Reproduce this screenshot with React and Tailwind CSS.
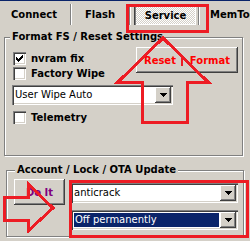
import React from 'react';

const RED = '#ed1c24';

function CheckBox({ checked }) {
  return (
    <span className="flex h-[13px] w-[13px] shrink-0 items-center justify-center bg-white shadow-[inset_1px_1px_#808080,inset_2px_2px_#404040,inset_-1px_-1px_#fff,inset_-2px_-2px_#d4d0c8]">
      {checked && (
        <svg width="7" height="7" viewBox="0 0 7 7" shapeRendering="crispEdges">
          <path d="M6 0h1v1H6zM5 1h2v1H5zM0 2h1v1H0zM4 2h3v1H4zM0 3h2v1H0zM3 3h3v1H3zM0 4h5v1H0zM1 5h3v1H1zM2 6h1v1H2z" fill="#000" />
        </svg>
      )}
    </span>
  );
}

function CheckRow({ label, checked }) {
  return (
    <div className="flex h-[13px] items-center gap-[5px]">
      <CheckBox checked={checked} />
      <span className="font-bold leading-[13px]">{label}</span>
    </div>
  );
}

const raised =
  'bg-[#d4d0c8] shadow-[inset_-1px_-1px_#404040,inset_1px_1px_#fff,inset_-2px_-2px_#808080]';

function ArrowBtn() {
  return (
    <div className={`flex h-[16px] w-[16px] shrink-0 items-center justify-center ${raised}`}>
      <svg width="7" height="4" viewBox="0 0 7 4" shapeRendering="crispEdges">
        <path d="M0 0h7v1H0zM1 1h5v1H1zM2 2h3v1H2zM3 3h1v1H3z" fill="#000" />
      </svg>
    </div>
  );
}

function Combo({ text, selected, className = '' }) {
  return (
    <div
      className={`flex h-[20px] items-center bg-white p-[2px] shadow-[inset_1px_1px_#808080,inset_2px_2px_#404040,inset_-1px_-1px_#fff,inset_-2px_-2px_#d4d0c8] ${className}`}
    >
      <div className="flex h-full flex-1 items-center">
        {selected ? (
          <span className="m-[1px] flex h-[14px] flex-1 items-center bg-[#0a246a] pl-[1px] leading-[14px] text-white">
            {text}
          </span>
        ) : (
          <span className="pl-[1px] leading-[14px]">{text}</span>
        )}
      </div>
      <ArrowBtn />
    </div>
  );
}

function Sep() {
  return <div className="h-[21px] w-[2px] shrink-0 border-l border-r border-l-[#808080] border-r-white" />;
}

export default function App() {
  return (
    <div className="relative h-[241px] w-[250px] overflow-hidden bg-[#d4d0c8] font-['DejaVu_Sans',Tahoma,sans-serif] text-[10px] text-black">
      {/* tabs */}
      <div className="flex h-[28px] items-center border-t border-[#0a246a] font-bold whitespace-nowrap">
        <span className="w-[70px] shrink-0 pl-[11px]">Connect</span>
        <Sep />
        <span className="w-[57px] shrink-0 pl-[13px]">Flash</span>
        <Sep />
        <div className="ml-[3px] flex h-[20px] w-[62px] shrink-0 items-center justify-center bg-[repeating-conic-gradient(#fff_0_25%,#d4d0c8_0_50%)] bg-[length:2px_2px] pt-[2px] pl-[1px] shadow-[inset_1px_1px_#404040,inset_2px_2px_#808080,inset_-1px_-1px_#fff]">
          Service
        </div>
        <div className="ml-[2px]">
          <Sep />
        </div>
        <span className="pl-[10px]">MemTools</span>
      </div>

      {/* Format FS / Reset Settings */}
      <div className="relative mt-[9px] ml-[4px] h-[119px] w-[239px] border border-[#808080] pt-[9px] pr-[4px] pl-[7px] shadow-[inset_1px_1px_#fff,1px_1px_#fff]">
        <span className="absolute -top-[7px] left-[5px] bg-[#d4d0c8] px-[2px] font-bold leading-[12px]">
          Format FS / Reset Settings
        </span>
        <div className="flex items-start">
          <div className="mt-[5px] ml-[1px] flex flex-col gap-[2px]">
            <CheckRow label="nvram fix" checked />
            <CheckRow label="Factory Wipe" />
          </div>
          <button className={`ml-auto flex h-[26px] w-[102px] items-center justify-center font-bold text-[#ff0000] ${raised}`}>
            Reset&nbsp;&nbsp;&nbsp;&nbsp;Format
          </button>
        </div>
        <Combo text="User Wipe Auto" className="mt-[5px] w-[161px]" />
        <div className="mt-[6px] ml-[1px]">
          <CheckRow label="Telemetry" />
        </div>
      </div>

      {/* Account / Lock / OTA Update */}
      <div className="relative mt-[14px] ml-[6px] h-[67px] w-[238px] border border-[#808080] pt-[8px] pl-[7px] shadow-[inset_1px_1px_#fff,1px_1px_#fff]">
        <span className="absolute -top-[7px] left-[8px] bg-[#d4d0c8] px-[2px] font-bold leading-[12px]">
          Account / Lock / OTA Update
        </span>
        <div className="flex items-start gap-[6px]">
          <button className={`flex h-[26px] w-[51px] shrink-0 items-center justify-center font-bold text-[#800080] ${raised}`}>
            Do It
          </button>
          <div className="mt-[4px] flex w-[167px] flex-col gap-[7px]">
            <Combo text="anticrack" />
            <Combo text="Off permanently" selected />
          </div>
        </div>
      </div>

      {/* red annotations */}
      <svg
        className="pointer-events-none absolute top-0 left-0"
        width="250"
        height="241"
        viewBox="0 0 250 241"
        shapeRendering="crispEdges"
      >
        <g fill="none" stroke={RED} strokeWidth="3" strokeLinejoin="miter">
          <rect x="127.5" y="5.5" width="80" height="26" />
          <rect x="70.5" y="181.5" width="177" height="55" />
          <polygon points="163,38 208,82 187,82 187,122 142,122 142,82 118,82" />
          <polygon points="53,208 28,231 28,220 4,220 4,197 28,197 28,184" />
        </g>
        <line x1="182" y1="58" x2="182" y2="66" stroke={RED} strokeWidth="2" />
      </svg>
    </div>
  );
}
